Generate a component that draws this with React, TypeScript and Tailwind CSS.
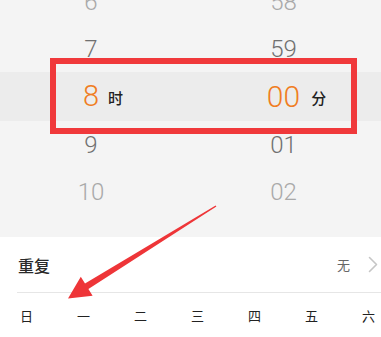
import React from 'react';

const hours = [
  { h: '6', m: '58', tone: 'text-[#a9a9a9]' },
  { h: '7', m: '59', tone: 'text-[#707070]' },
  { h: '8', m: '00', tone: 'selected' },
  { h: '9', m: '01', tone: 'text-[#707070]' },
  { h: '10', m: '02', tone: 'text-[#a9a9a9]' },
];

const weekdays = ['日', '一', '二', '三', '四', '五', '六'];

const cjk = { fontFamily: '"Noto Sans CJK SC", sans-serif' };
const digits = { fontFamily: 'Roboto, "Open Sans", sans-serif' };

const App = () => {
  return (
    <div className="relative w-[381px] h-[337px] overflow-hidden bg-white">
      {/* time picker wheel */}
      <div className="h-[237px] bg-[#f4f4f4] overflow-hidden">
        <div className="mt-[-22px] flex flex-col">
          {hours.map(row => {
            const selected = row.tone === 'selected';
            return (
              <div
                key={row.h}
                className={
                  selected
                    ? 'grid grid-cols-[182px_1fr] items-center h-[49px] bg-[#ececec]'
                    : 'grid grid-cols-[182px_1fr] items-center h-[47px]'
                }
                style={digits}
              >
                <div className="flex justify-center">
                  <span
                    className={
                      selected
                        ? 'relative text-[29px] font-light text-[#f07d22] leading-none'
                        : `text-[24px] font-light leading-none ${row.tone}`
                    }
                  >
                    {row.h}
                    {selected && (
                      <span
                        className="absolute left-full top-1/2 -translate-y-1/2 ml-[9px] text-[15px] font-medium text-[#222] whitespace-nowrap"
                        style={cjk}
                      >
                        时
                      </span>
                    )}
                  </span>
                </div>
                <div className="flex justify-center pl-[4px]">
                  <span
                    className={
                      selected
                        ? 'relative text-[30px] font-light text-[#f07d22] leading-none'
                        : `text-[24px] font-light leading-none ${row.tone}`
                    }
                  >
                    {row.m}
                    {selected && (
                      <span
                        className="absolute left-full top-1/2 -translate-y-1/2 ml-[11px] text-[15px] font-medium text-[#222] whitespace-nowrap"
                        style={cjk}
                      >
                        分
                      </span>
                    )}
                  </span>
                </div>
              </div>
            );
          })}
        </div>
      </div>

      {/* repeat settings */}
      <div className="h-[100px] bg-white" style={cjk}>
        <div className="ml-[17px] h-[56px] flex items-center justify-between border-b border-[#e6e6e6]">
          <span className="ml-[1px] text-[16px] font-medium text-[#2a2a2a]">重复</span>
          <div className="flex items-center">
            <span className="text-[13px] text-[#666]">无</span>
            <svg className="ml-[18px] mr-[3px]" width="10" height="17" viewBox="0 0 10 17" fill="none">
              <polyline points="1.5,1.5 8.5,8.5 1.5,15.5" stroke="#c6c6c6" strokeWidth="1.6" strokeLinecap="round" strokeLinejoin="round" />
            </svg>
          </div>
        </div>
        <div className="flex items-center justify-between h-[44px] pl-[20px] pr-[6px] pt-[2px]">
          {weekdays.map(d => (
            <span key={d} className="text-[13px] text-[#222] w-[13px] text-center">
              {d}
            </span>
          ))}
        </div>
      </div>

      {/* annotation: red frame */}
      <div className="absolute left-[50px] top-[58px] w-[307px] h-[76px] border-[6px] border-[#f0393b] pointer-events-none" />

      {/* annotation: red arrow */}
      <svg className="absolute left-0 top-0 pointer-events-none" width="381" height="337" viewBox="0 0 381 337">
        <polygon
          points="216.4,206.6 88.4,289 92.6,295.8 68,298.5 80.8,276.8 85,283.6 215.6,205.4"
          fill="#ee3538"
        />
      </svg>
    </div>
  );
};

export default App;
